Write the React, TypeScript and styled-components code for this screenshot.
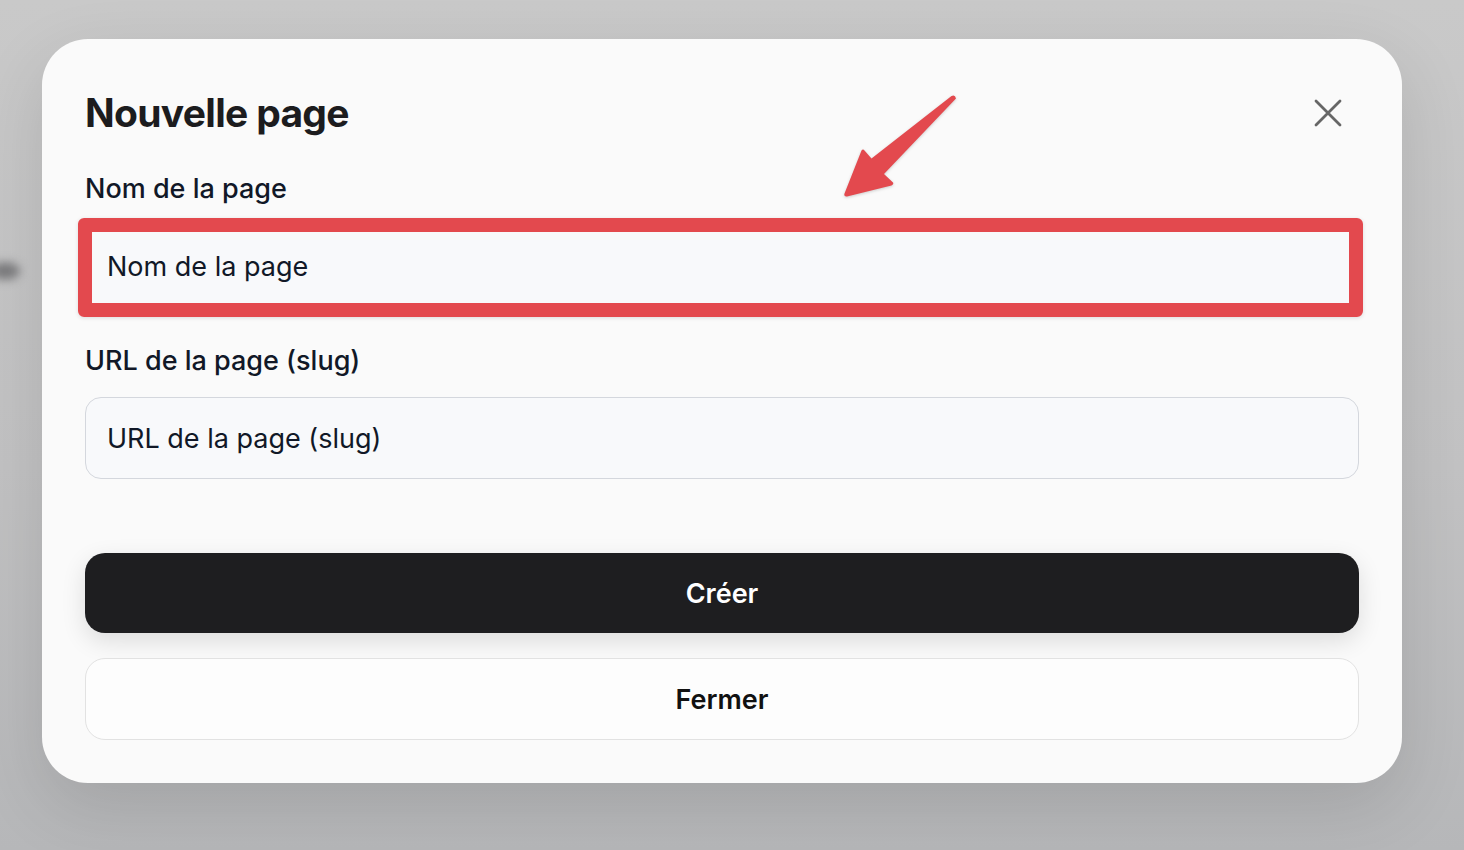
import React from 'react'
import styled, { createGlobalStyle } from 'styled-components'

const GlobalStyle = createGlobalStyle`
  html, body {
    margin: 0;
    padding: 0;
  }
  body {
    width: 1464px;
    height: 850px;
    overflow: hidden;
    font-family: Inter, 'Noto Sans', sans-serif;
    background: linear-gradient(180deg, #c9c9c9 0%, #c2c2c3 55%, #b6b7b9 100%);
  }
`

const Backdrop = styled.div`
  position: relative;
  width: 1464px;
  height: 850px;
  padding-top: 39px;
  box-sizing: border-box;
`

const Blob = styled.div`
  position: absolute;
  left: -10px;
  top: 262px;
  width: 30px;
  height: 18px;
  border-radius: 50%;
  background: #7c7c7e;
  filter: blur(5px);
`

const Modal = styled.div`
  position: relative;
  margin-left: 42px;
  width: 1360px;
  box-sizing: border-box;
  padding: 51px 43px 43px 43px;
  background: #fafafa;
  border-radius: 46px;
  box-shadow: 0 24px 70px rgba(0, 0, 0, 0.12);
  display: flex;
  flex-direction: column;
`

const Header = styled.div`
  display: flex;
  align-items: center;
  justify-content: space-between;
  height: 46px;
  margin-bottom: 37px;
`

const Title = styled.h1`
  margin: 0;
  font-size: 39px;
  font-weight: 700;
  letter-spacing: -0.7px;
  color: #1c1c1e;
  line-height: 46px;
`

const CloseButton = styled.button`
  border: none;
  background: transparent;
  padding: 0;
  margin-right: 17px;
  width: 28px;
  height: 28px;
  display: flex;
  align-items: center;
  justify-content: center;
  cursor: pointer;
`

const Label = styled.label`
  display: block;
  font-size: 27px;
  font-weight: 500;
  color: #111827;
  line-height: 32px;
  margin-bottom: 20px;
`

const Field = styled.div<{ $gap: number }>`
  position: relative;
  margin-bottom: ${(p) => p.$gap}px;
`

const Input = styled.div`
  height: 82px;
  box-sizing: border-box;
  border: 1.5px solid #d4d7dd;
  border-radius: 16px;
  background: #f8f9fb;
  padding: 0 21px;
  display: flex;
  align-items: center;
  font-size: 27px;
  color: #111827;
`

const Highlight = styled.div`
  position: absolute;
  top: -7px;
  left: -7px;
  right: -4px;
  bottom: -10px;
  border: 14px solid #e3494e;
  border-radius: 6px;
  box-shadow: 0 1px 4px rgba(0, 0, 0, 0.12);
  pointer-events: none;
`

const Arrow = styled.svg`
  position: absolute;
  left: 758px;
  top: 41px;
  pointer-events: none;
  filter: drop-shadow(0 1px 1.5px rgba(0, 0, 0, 0.18));
`

const Button = styled.button<{ $primary?: boolean }>`
  height: ${(p) => (p.$primary ? 80 : 82)}px;
  width: 100%;
  border-radius: 20px;
  font-family: Inter, 'Noto Sans', sans-serif;
  font-size: 27px;
  font-weight: 600;
  cursor: pointer;
  border: ${(p) => (p.$primary ? 'none' : '1.5px solid #e2e2e2')};
  background: ${(p) => (p.$primary ? '#1e1e20' : '#fdfdfd')};
  color: ${(p) => (p.$primary ? '#ffffff' : '#111111')};
  box-shadow: ${(p) => (p.$primary ? '0 8px 24px rgba(0, 0, 0, 0.12)' : 'none')};
`

const Actions = styled.div`
  display: flex;
  flex-direction: column;
  gap: 25px;
`

function App() {
  return (
    <Backdrop>
      <GlobalStyle />
      <Blob />
      <Modal>
        <Header>
          <Title>Nouvelle page</Title>
          <CloseButton aria-label="Fermer">
            <svg width="28" height="28" viewBox="0 0 28 28">
              <path
                d="M2 2 L26 26 M26 2 L2 26"
                stroke="#666666"
                strokeWidth="2.8"
                strokeLinecap="round"
              />
            </svg>
          </CloseButton>
        </Header>

        <Label>Nom de la page</Label>
        <Field $gap={38}>
          <Input>Nom de la page</Input>
          <Highlight />
        </Field>

        <Label>URL de la page (slug)</Label>
        <Field $gap={74}>
          <Input>URL de la page (slug)</Input>
        </Field>

        <Actions>
          <Button $primary>Créer</Button>
          <Button>Fermer</Button>
        </Actions>

        <Arrow width="170" height="130" viewBox="800 80 170 130">
          <path
            d="M951.5 96 Q955 94 956 98.5 L884 174 L893 182.5 Q894 184.5 891.5 185.5 L847 196.5 Q843.5 197 844.5 193.5 L861.5 150.5 Q863 148.5 864.5 150.5 L871.5 158.5 Z"
            fill="#e3494e"
          />
        </Arrow>
      </Modal>
    </Backdrop>
  )
}

export default App
